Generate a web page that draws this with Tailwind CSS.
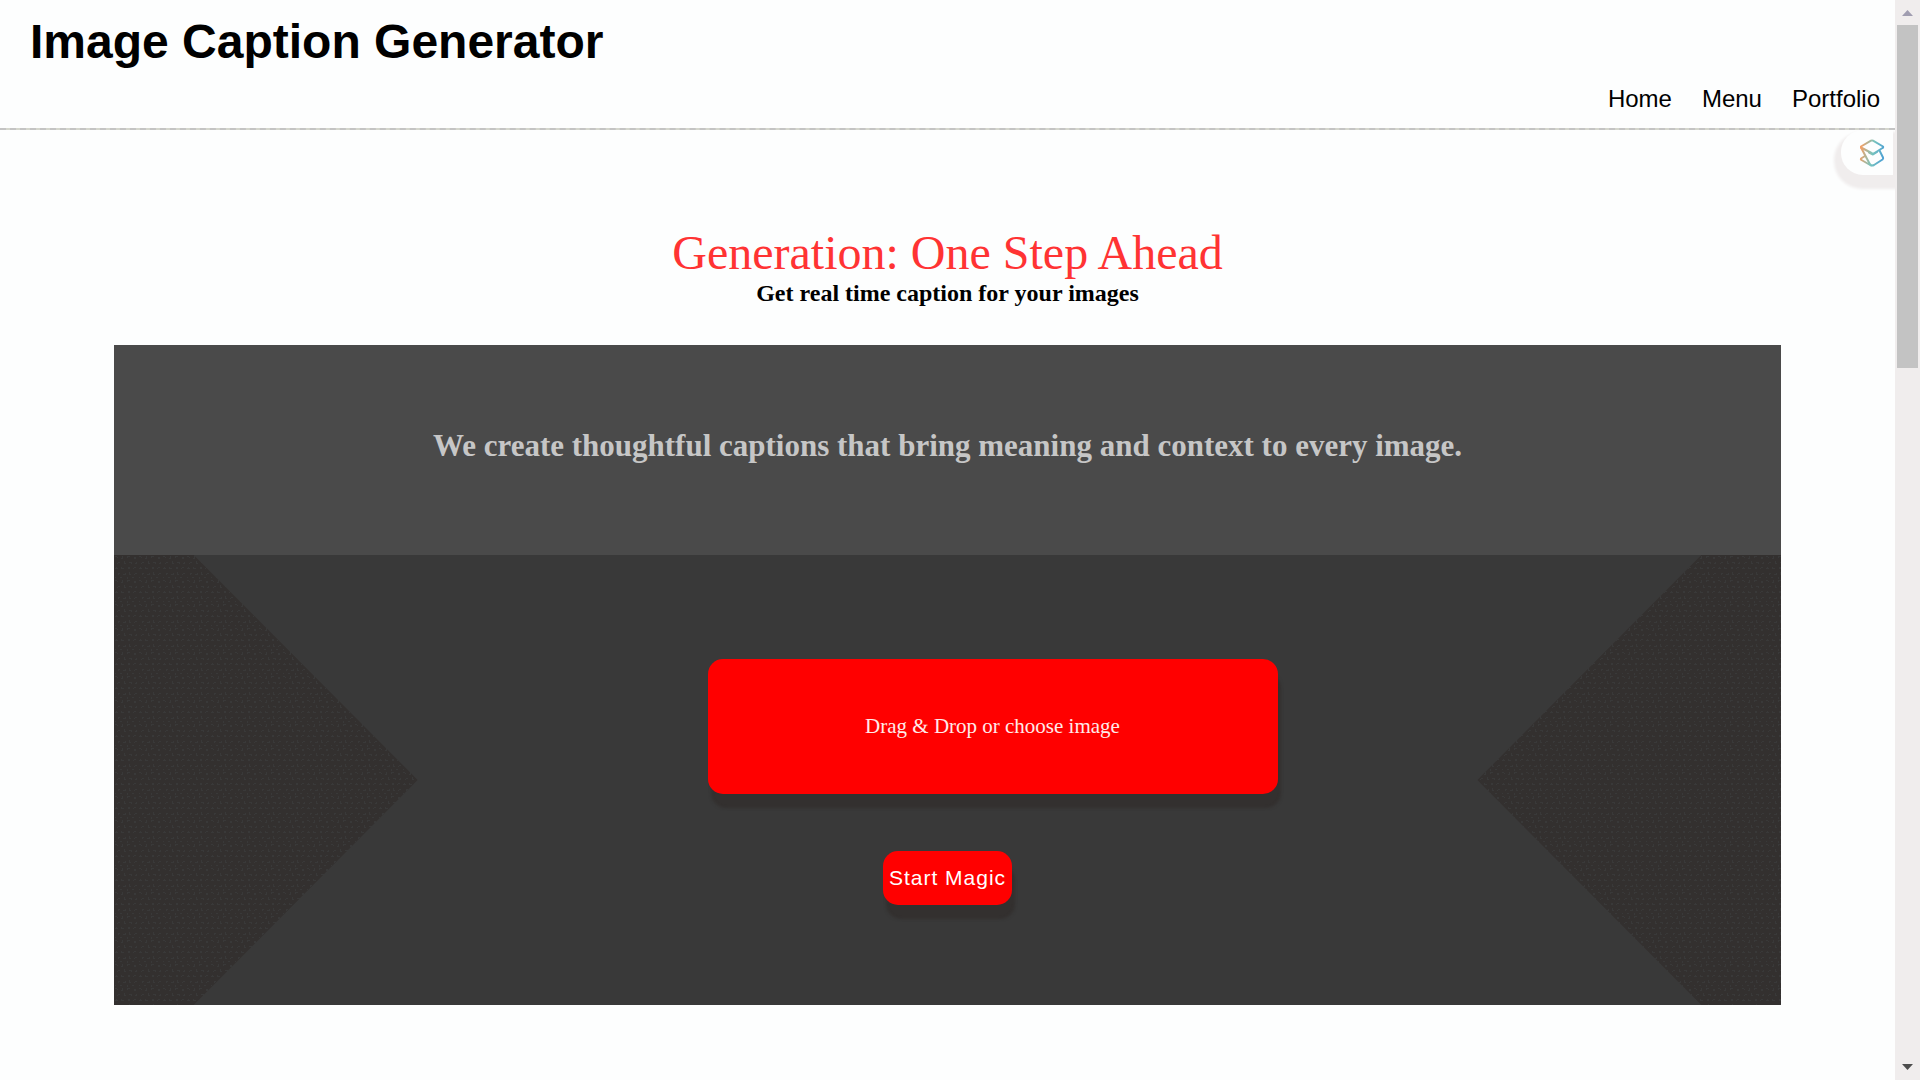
<!DOCTYPE html>
<html lang="en">
<head>
<meta charset="utf-8">
<meta name="viewport" content="width=device-width, initial-scale=1">
<title>Image Caption Generator</title>
<script src="https://cdn.jsdelivr.net/npm/@tailwindcss/browser@4"></script>
</head>
<body class="flex h-screen overflow-hidden bg-[#fdfefe] font-['Liberation_Serif',serif] text-black">
  <div class="relative min-w-0 flex-1 overflow-hidden">
    <header class="border-b-2 border-dashed border-[#c4c4c4] bg-[linear-gradient(#d4d6cc,#d4d6cc)] bg-[length:100%_2px] bg-bottom bg-no-repeat bg-origin-border px-[30px] pt-[14px] pb-4 font-['Liberation_Sans',sans-serif]">
      <h1 class="text-5xl leading-[55px] font-bold">Image Caption Generator</h1>
      <nav class="-mr-[15px] mt-4 flex justify-end gap-[30px] text-2xl leading-[27px]">
        <a href="#">Home</a>
        <a href="#">Menu</a>
        <a href="#">Portfolio</a>
      </nav>
    </header>

    <!-- Side widget -->
    <button type="button" aria-label="Open extension" class="absolute top-[130px] right-[2px] flex h-[45px] w-[52px] items-center justify-center rounded-l-[22px] bg-[#fdfefe] pl-[10px] shadow-[-1px_8px_3px_6px_#f0eded]">
      <svg class="h-7 w-[26px]" viewBox="0 0 26 28" fill="none" stroke="url(#g)" stroke-width="2" stroke-linejoin="round" stroke-linecap="round">
        <defs><linearGradient id="g" x1="1" y1="14" x2="25" y2="18" gradientUnits="userSpaceOnUse"><stop stop-color="#f3a066"/><stop offset=".5" stop-color="#78c4bd"/><stop offset="1" stop-color="#4b9fd5"/></linearGradient></defs>
        <path d="M2 7.500L12 1.700Q13 1.200 14 1.700L24 7.500Q24.500 8.500 23.500 9L15.500 14Q14 15 12.500 14L2 8.500Z"/>
        <path d="M2 8.500L10.500 24.500Q11.500 26.500 13 26.500Q14 26.500 15 26L23.500 20.500Q24.500 19.500 24 18.500L20.500 11.500"/>
        <path d="M6 17L2 19.500Q1.500 20.500 2.500 21L12 26.500"/>
        <path d="M10 13.500L14 15.500L18 13"/>
      </svg>
    </button>

    <main class="mx-auto w-[88%] pt-24">
      <div class="text-center">
        <h2 class="text-5xl leading-[54px] text-[#ff3333]">Generation: One Step Ahead</h2>
        <p class="text-2xl leading-[27px] font-bold">Get real time caption for your images</p>
      </div>

      <section class="mt-[38px]">
        <div class="flex h-[210px] items-center justify-center bg-[#4a4a4a] pb-2 text-center">
          <h3 class="text-[31px] leading-9 font-bold text-[#c6c6c6]">We create thoughtful captions that bring meaning and context to every image.</h3>
        </div>
        <div class="relative h-[450px] bg-[#393939]">
          <!-- Woven side panels -->
          <svg class="absolute top-0 left-0 h-full w-[304px] [clip-path:polygon(0_0,80px_0,100%_50%,80px_100%,0_100%)]" aria-hidden="true">
            <defs>
              <pattern id="weave" width="24" height="24" patternUnits="userSpaceOnUse">
                <rect width="24" height="24" fill="#33302f"/>
                <path fill="#393939" d="M1 1h2v1h-2zM3 2h1v1h-1zM7 3h2v1h-2zM8 1h1v2h-1zM13 1h3v1h-3zM13 2h1v1h-1zM20 2h2v2h-2zM4 7h2v1h-2zM3 8h1v1h-1zM10 6h1v3h-1zM11 8h1v1h-1zM15 7h3v1h-3zM17 8h1v1h-1zM21 8h2v1h-2zM22 7h1v1h-1zM1 13h3v1h-3zM2 12h1v1h-1zM7 12h1v2h-1zM8 13h2v1h-2zM14 12h2v2h-2zM19 13h1v1h-1zM20 12h2v1h-2zM4 18h1v2h-1zM5 18h1v1h-1zM9 19h3v1h-3zM11 18h1v1h-1zM15 17h1v3h-1zM16 19h1v1h-1zM21 18h2v1h-2zM20 19h1v1h-1zM1 22h1v1h-1zM6 22h2v1h-2zM13 22h1v2h-1zM18 22h2v1h-2z"/>
              </pattern>
            </defs>
            <rect width="100%" height="100%" fill="url(#weave)"/>
          </svg>
          <svg class="absolute top-0 right-0 h-full w-[304px] [clip-path:polygon(100%_0,calc(100%_-_80px)_0,0_50%,calc(100%_-_80px)_100%,100%_100%)]" aria-hidden="true">
            <rect width="100%" height="100%" fill="url(#weave)"/>
          </svg>
          <form class="relative flex flex-col items-center pt-[104px]">
            <label for="image" class="ml-[90px] flex h-[135px] w-[570px] items-center justify-center rounded-[15px] bg-[#ff0000] pb-[2px] text-[21px] leading-6 text-[#ffeaea] shadow-[3px_14px_3px_#33302f]">Drag &amp; Drop or choose image</label>
            <input id="image" type="file" accept="image/*" class="sr-only">
            <button type="button" class="mt-[57px] h-[54px] rounded-[15px] bg-[#ff0000] px-[6px] font-['Liberation_Sans',sans-serif] text-[21px] leading-6 tracking-[1px] text-white shadow-[3px_14px_3px_#33302f]">Start Magic</button>
          </form>
        </div>
      </section>
    </main>
  </div>

  <!-- Scroll bar -->
  <div class="flex w-[25px] shrink-0 flex-col items-center bg-[#f0eded]" aria-hidden="true">
    <svg class="h-[25px] w-[25px] shrink-0" viewBox="0 0 25 25"><path d="M7 16L12.500 10L18 16Z" fill="#a09db0"/></svg>
    <div class="h-[343px] w-[21px] bg-[#c3c3c3]"></div>
    <svg class="mt-auto h-[25px] w-[25px] shrink-0" viewBox="0 0 25 25"><path d="M7 9H18L12.500 15Z" fill="#4d4d4d"/></svg>
  </div>
</body>
</html>
